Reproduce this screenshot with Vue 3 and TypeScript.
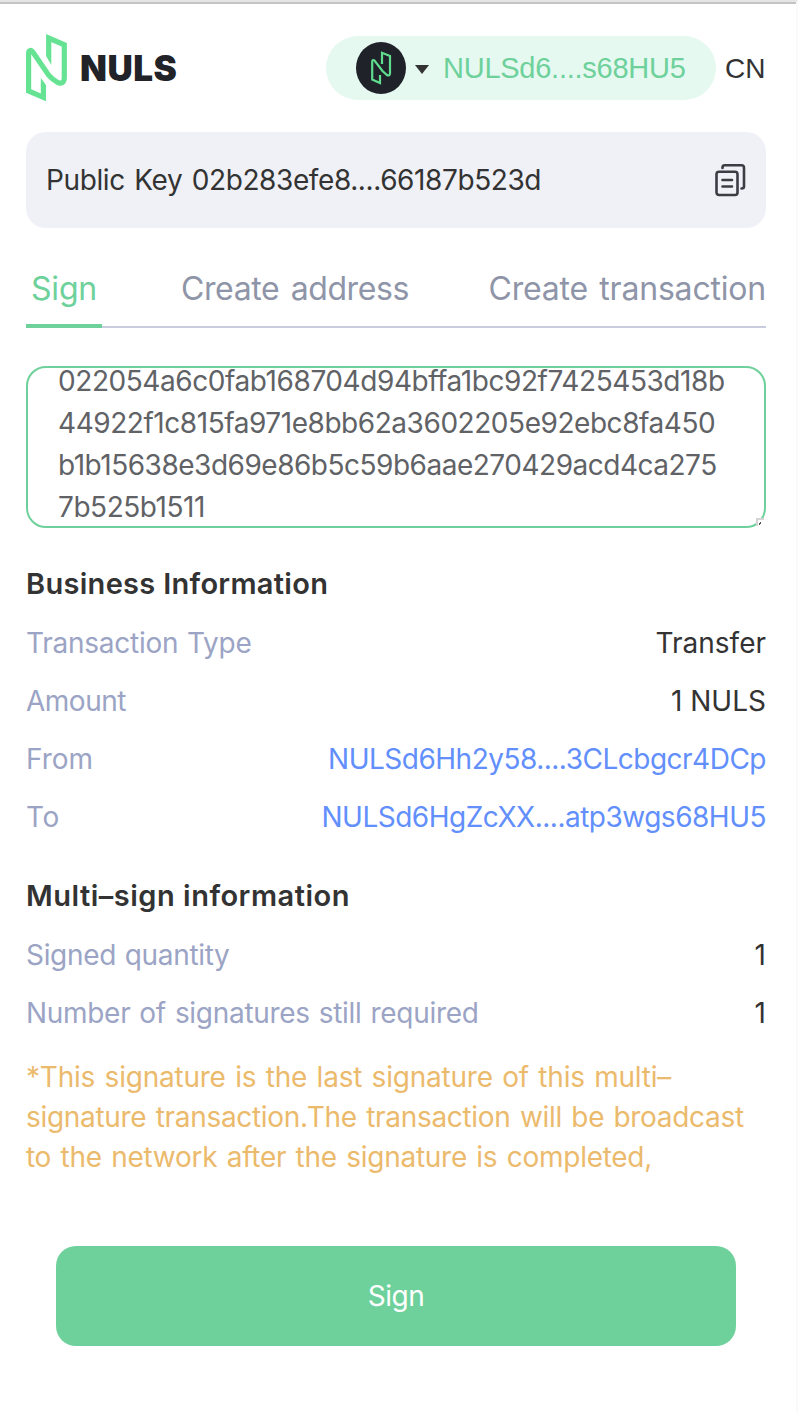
<script setup lang="ts">
interface Row { label: string; value: string; link?: boolean; id: string }

const business: Row[] = [
  { id: 'type', label: 'Transaction Type', value: 'Transfer' },
  { id: 'amount', label: 'Amount', value: '1 NULS' },
  { id: 'from', label: 'From', value: 'NULSd6Hh2y58....3CLcbgcr4DCp', link: true },
  { id: 'to', label: 'To', value: 'NULSd6HgZcXX....atp3wgs68HU5', link: true },
]
const multi: Row[] = [
  { id: 'signed', label: 'Signed quantity', value: '1' },
  { id: 'required', label: 'Number of signatures still required', value: '1' },
]
const hexLines: string[] = [
  '022054a6c0fab168704d94bffa1bc92f7425453d18b',
  '44922f1c815fa971e8bb62a3602205e92ebc8fa450',
  'b1b15638e3d69e86b5c59b6aae270429acd4ca275',
  '7b525b1511',
]
const warning: string[] = [
  '*This signature is the last signature of this multi–',
  'signature transaction.The transaction will be broadcast',
  'to the network after the signature is completed,',
]
</script>

<template>
  <div class="page">
    <header class="header">
      <svg class="mark" viewBox="0 0 42 68">
        <path d="M22.700 22V4L38.300 10.800V43.500C38.300 49 35 50.500 31 48Q27 46 22.500 41L7.500 19C5 15 2.600 16 2.600 19.500V57L17.400 63.300V51" fill="none" stroke="#66e392" stroke-width="5.200" />
        <path d="M20.100 22H25.300V31ZM14.800 44L20 51H14.800Z" fill="#66e392" />
      </svg>
      <span class="brand">NULS</span>
      <div class="account">
        <svg class="avatar" viewBox="0 0 50 52">
          <ellipse cx="25" cy="26" rx="25" ry="26" fill="#20222a" />
          <path d="M26 22V10.800L34 14V31.500Q33.500 34.500 31 33L26.500 29L18.500 18.500Q16.200 17 16.200 20V37.500L24 41V33" fill="none" stroke="#5fdc8e" stroke-width="2.200" />
        </svg>
        <svg class="caret" viewBox="0 0 14 9"><path d="M0 0H14L7 9Z" fill="#333" /></svg>
        <span class="address">NULSd6....s68HU5</span>
      </div>
      <span class="lang">CN</span>
    </header>

    <div class="key">
      <span class="key-text">Public Key 02b283efe8....66187b523d</span>
      <svg class="copy" viewBox="0 0 32 34" fill="none" stroke="#3b3d45" stroke-width="2.600" stroke-linecap="round" stroke-linejoin="round">
        <rect x="2.500" y="8.800" width="21" height="23.200" rx="2.500" />
        <path d="M8.500 5V4.500Q8.500 2.200 10.800 2.200H27.500Q30 2.200 30 4.700V23.500Q30 25.500 27.500 25.500M8.500 17H18M8.500 23.500H18" />
      </svg>
    </div>

    <nav class="tabs">
      <span class="tab active">Sign</span>
      <span class="tab t-address">Create address</span>
      <span class="tab t-tx">Create transaction</span>
    </nav>

    <div class="hex">
      <div v-for="(line, i) in hexLines" :key="line" :class="'hex-' + i">{{ line }}</div>
      <svg class="grip" viewBox="0 0 8 8"><path d="M1 8V1H8" fill="none" stroke="#d4d4d4" stroke-width="2" /><path d="M3 5H4V4H5V6H4V7H3Z" fill="#555" /></svg>
    </div>

    <section class="info">
      <h2 class="h-business">Business Information</h2>
      <div v-for="r in business" :key="r.id" class="row">
        <span class="label" :class="'l-' + r.id">{{ r.label }}</span>
        <span class="value" :class="{ link: r.link }">{{ r.value }}</span>
      </div>
    </section>
    <section class="info second">
      <h2 class="h-multi">Multi–sign information</h2>
      <div v-for="r in multi" :key="r.id" class="row">
        <span class="label" :class="'l-' + r.id">{{ r.label }}</span>
        <span class="value">{{ r.value }}</span>
      </div>
    </section>

    <div class="warning">
      <div v-for="(line, i) in warning" :key="i" :class="'w-' + i">{{ line }}</div>
    </div>
    <button class="submit">Sign</button>
  </div>
</template>

<style>
html, body { background: #fff; overflow: hidden; }
</style>
<style scoped>
.page { box-sizing: border-box; width: 798px; height: 1414px; padding: 0 30px 0 26px; border-top: 2px solid #e5e5e5; border-right: 2px solid #fafafa; box-shadow: inset 0 2px #c4c4c4; font: 28px/40px Inter, "Liberation Sans", sans-serif; color: #333; white-space: nowrap; }
.header { display: flex; align-items: center; height: 64px; padding-top: 34px; }
.mark { width: 42px; height: 68px; flex: none; }
.brand { margin-left: 12px; width: 99px; font-size: 35px; font-weight: 900; color: #222329; letter-spacing: 0.5px; }
.account { box-sizing: border-box; margin-left: 147px; display: flex; align-items: center; width: 390px; height: 64px; border-radius: 32px; background: #e5f9f0; padding-left: 30px; flex: none; }
.avatar { width: 50px; height: 52px; }
.caret { width: 14px; height: 9px; margin: 2px 14px 0 9px; }
.address { font-family: "Liberation Sans", sans-serif; color: #6ed19b; font-size: 29px; letter-spacing: -0.25px; }
.lang { font-family: "Liberation Sans", sans-serif; font-size: 28px; margin-left: 9px; padding-top: 1px; }
.key { display: flex; box-sizing: border-box; align-items: center; justify-content: space-between; height: 96px; margin-top: 32px; padding: 0 20px; border-radius: 20px; background: #f0f1f6; }
.key-text { letter-spacing: -0.4px; word-spacing: 2px; }
.copy { width: 32px; height: 34px; }
.tabs { box-sizing: border-box; display: flex; height: 64px; margin-top: 36px; border-bottom: 2px solid #c8ccdc; font-size: 32px; line-height: 50px; color: #8f95a8; }
.tab { height: 64px; box-sizing: border-box; }
.active { width: 76px; padding-left: 5px; border-bottom: 4px solid #6ed19b; color: #6ed19b; letter-spacing: -0.2px; }
.t-address { margin-left: 79px; letter-spacing: -0.4px; word-spacing: 2.8px; }
.t-tx { margin-left: auto; letter-spacing: -0.2px; word-spacing: 2.6px; }
.hex { position: relative; display: flow-root; box-sizing: border-box; height: 162px; margin-top: 38px; border: 2px solid #6ed19b; border-radius: 20px; padding: 0 30px; line-height: 42px; color: #606266; letter-spacing: -0.45px; }
.hex-0 { margin-top: -8px; letter-spacing: -0.43px; }
.hex-2 { letter-spacing: -0.49px; }
.grip { position: absolute; right: 0; bottom: 0; width: 8px; height: 8px; background: #fff; }
.info { margin-top: 27px; }
.second { margin-top: 20px; }
h2 { margin: 0; height: 59px; font-size: 29px; line-height: 59px; font-weight: 600; }
.h-business { line-height: 57px; letter-spacing: 0.3px; }
.h-multi { height: 60px; letter-spacing: 0.5px; }
.row { display: flex; justify-content: space-between; line-height: 58px; }
.label { color: #9ba4c5; }
.l-type { letter-spacing: -0.25px; word-spacing: 1px; }
.l-amount { letter-spacing: -0.5px; }
.l-to { letter-spacing: 0.5px; }
.l-signed { letter-spacing: -0.33px; word-spacing: 1.3px; }
.l-required { letter-spacing: -0.3px; word-spacing: 1.4px; }
.link { color: #628ffc; letter-spacing: -0.5px; }
.warning { margin-top: 15px; color: #ebba6c; word-spacing: 1.8px; }
.w-0 { letter-spacing: -0.22px; }
.w-1 { letter-spacing: -0.31px; }
.w-2 { letter-spacing: -0.27px; }
.submit { display: block; width: 680px; height: 100px; margin: 69px 0 0 30px; border: 0; border-radius: 20px; background: #6ed19b; color: #fff; font: 28px/100px Inter, sans-serif; letter-spacing: -0.5px; padding: 0; }
</style>
